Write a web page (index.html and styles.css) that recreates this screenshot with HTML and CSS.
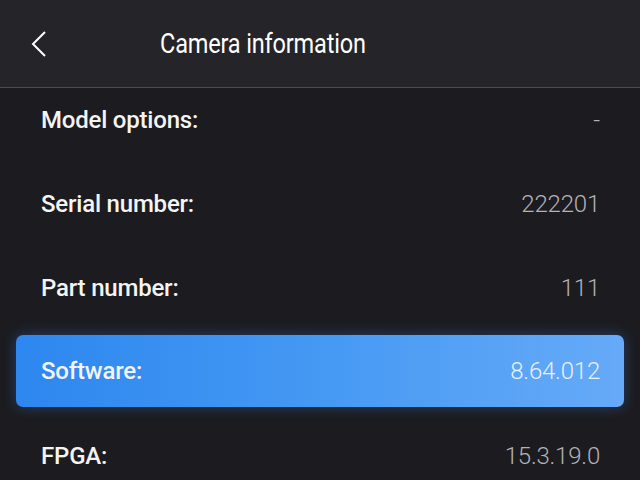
FILE: index.html
```html
<!DOCTYPE html>
<html>
<head>
<meta charset="utf-8">
<link rel="stylesheet" href="styles.css">
</head>
<body>
<div class="screen">
  <header class="topbar">
    <button class="back" aria-label="Back">
      <svg width="24" height="30" viewBox="0 0 24 30"><path d="M17 3 L5 15 L17 27" fill="none" stroke="#fff" stroke-width="2"/></svg>
    </button>
    <h1 class="title">Camera information</h1>
  </header>
  <div class="viewport">
    <ul class="list">
      <li class="row"><span class="label">Model options:</span><span class="value">-</span></li>
      <li class="row"><span class="label">Serial number:</span><span class="value">222201</span></li>
      <li class="row"><span class="label">Part number:</span><span class="value">111</span></li>
      <li class="row selected"><span class="label">Software:</span><span class="value">8.64.012</span></li>
      <li class="row"><span class="label">FPGA:</span><span class="value">15.3.19.0</span></li>
    </ul>
  </div>
</div>
</body>
</html>
```
FILE: styles.css
```css
* { box-sizing: border-box; }
html, body { margin: 0; padding: 0; }
body { background: #1c1c20; font-family: Roboto, "Noto Sans", sans-serif; }
.screen { width: 640px; height: 480px; overflow: hidden; display: flex; flex-direction: column; }
.topbar {
  height: 88px; flex: none; background: #252529; border-bottom: 1px solid #4b4b50;
  position: relative; display: flex; align-items: center; padding-left: 160px;
}
.back {
  position: absolute; left: 28px; top: 29px; background: none; border: 0; padding: 0; width: 24px; height: 30px;
}
.back svg { display: block; }
.title {
  margin: 0; color: #fff; font-size: 28px; font-weight: 400; letter-spacing: -0.2px;
  transform: scaleX(0.84); transform-origin: left center; white-space: nowrap;
}
.viewport { flex: 1; overflow: hidden; }
.list { list-style: none; margin: -10px 0 0; padding: 0 16px; }
.row {
  height: 84px; display: flex; align-items: center; justify-content: space-between;
  padding: 0 24px 0 25px; border-radius: 7px;
}
.label { color: #f4f4f4; font-size: 24px; font-weight: 500; letter-spacing: -0.2px; }
.value { color: #b2b2b7; font-size: 24px; font-weight: 300; letter-spacing: -0.2px; }
.selected {
  height: 72px; margin: 5px 0 7px;
  background: linear-gradient(90deg, #2d87ef 0%, #4599f3 50%, #66aaf8 100%);
  box-shadow: 0 0 14px rgba(60, 130, 230, 0.35);
}
.selected .value { color: #e8f1ff; }
```
